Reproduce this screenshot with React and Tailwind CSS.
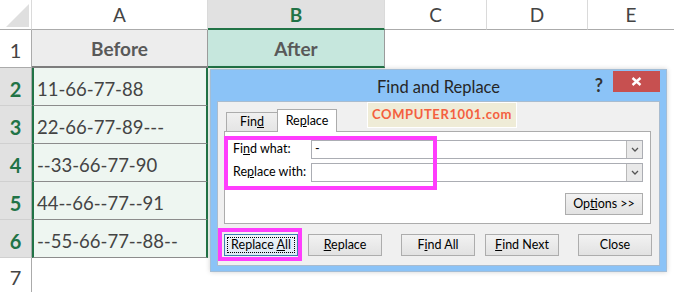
import React from "react";

const data = [
  { n: 2, v: "11-66-77-88" },
  { n: 3, v: "22-66-77-89---" },
  { n: 4, v: "--33-66-77-90" },
  { n: 5, v: "44--66--77--91" },
  { n: 6, v: "--55-66-77--88--" },
];

function Btn({ children, className = "" }) {
  return (
    <div
      className={
        "w-[74px] h-[22px] flex items-center justify-center border border-[#adadad] bg-gradient-to-b from-[#f2f2f2] to-[#e2e2e2] " +
        className
      }
    >
      {children}
    </div>
  );
}

function Chevron() {
  return (
    <div className="w-[16px] h-full flex items-center justify-center bg-[#e9e9e9] border-l border-[#b9b9b9]">
      <svg width="8" height="5" viewBox="0 0 8 5">
        <path d="M1 1 L4 4 L7 1" fill="none" stroke="#555" strokeWidth="1.3" />
      </svg>
    </div>
  );
}

function FindReplace() {
  return (
    <div className="absolute left-[210px] top-[69px] w-[457px] h-[203px] flex flex-col bg-[#8bc3f7] border border-[#a3bdd6] shadow-[0_0_5px_rgba(0,0,0,0.18)] text-black">
      {/* title bar */}
      <div className="relative h-[31px] flex items-center justify-center pt-[3px] text-[16.5px] text-[#262626]">
        Find and Replace
        <span className="absolute right-[63px] top-[2px] text-[18px] font-bold text-[#333]">?</span>
        <div className="absolute right-[6px] top-[1px] w-[47px] h-[21px] bg-[#c75050] flex items-center justify-center">
          <svg width="11" height="9" viewBox="0 0 11 9">
            <path d="M1.5 1 L9.5 8 M9.5 1 L1.5 8" stroke="#fff" strokeWidth="2.4" />
          </svg>
        </div>
      </div>

      {/* body */}
      <div className="mx-[6px] mb-[5px] flex-1 flex flex-col bg-[#f0f0f0] border border-[#a9bccf] text-[12.5px]">
        {/* tabs */}
        <div className="h-[29px] flex items-end pl-[8px]">
          <div className="w-[51px] h-[19px] flex items-center justify-center border border-r-0 border-b-0 border-[#acacac] bg-gradient-to-b from-[#f0f0f0] to-[#e5e5e5]">
            <span>
              Fin<span className="underline">d</span>
            </span>
          </div>
          <div className="relative z-10 -mb-px w-[60px] h-[23px] flex items-center justify-center border border-b-0 border-[#acacac] bg-white">
            <span>
              Re<span className="underline">p</span>lace
            </span>
          </div>
          <div className="self-start ml-[30px] w-[150px] h-[26px] flex items-center justify-center bg-[#efecd7] border border-white text-[13px] font-bold tracking-[0.6px] text-[#f4603f]">
            COMPUTER1001.com
          </div>
        </div>

        {/* tab panel */}
        <div className="relative ml-[6px] w-[427px] h-[93px] flex flex-col bg-white border border-[#acacac] pt-[8px]">
          <div className="flex items-center h-[19px]">
            <span className="w-[86px] pl-[8px]">
              Fi<span className="underline">n</span>d what:
            </span>
            <div className="w-[332px] h-[19px] flex items-center border border-[#abadb3]">
              <span className="flex-1 pl-[3px] leading-none">-</span>
              <Chevron />
            </div>
          </div>
          <div className="flex items-center h-[19px] mt-[4px]">
            <span className="w-[86px] pl-[8px]">
              Re<span className="underline">p</span>lace with:
            </span>
            <div className="w-[332px] h-[19px] flex items-center border border-[#abadb3]">
              <span className="flex-1" />
              <Chevron />
            </div>
          </div>
          <div className="self-end mr-[7px] mt-[11px]">
            <Btn className="w-[78px] h-[21px]">
              <span>
                Op<span className="underline">t</span>ions &gt;&gt;
              </span>
            </Btn>
          </div>
          <div className="absolute left-[-1px] top-[4px] w-[213px] h-[54px] border-4 border-[#ff3dfd]" />
        </div>

        {/* buttons */}
        <div className="flex items-center mt-[10px] pl-[6px]">
          <div className="relative">
            <div className="w-[74px] h-[22px] p-[2px] border border-[#3c7fb1] bg-gradient-to-b from-[#edf3f9] to-[#dde8f3]">
              <div className="w-full h-full flex items-center justify-center border border-dotted border-black">
                <span>
                  Replace <span className="underline">A</span>ll
                </span>
              </div>
            </div>
            <div className="absolute left-[-6px] top-[-6px] w-[84px] h-[33px] border-4 border-[#ff3dfd]" />
          </div>
          <Btn className="ml-[10px]">
            <span>
              <span className="underline">R</span>eplace
            </span>
          </Btn>
          <Btn className="ml-[19px]">
            <span>
              F<span className="underline">i</span>nd All
            </span>
          </Btn>
          <Btn className="ml-[10px]">
            <span>
              <span className="underline">F</span>ind Next
            </span>
          </Btn>
          <Btn className="ml-[19px]">Close</Btn>
        </div>
      </div>
    </div>
  );
}

export default function App() {
  return (
    <div className="relative w-[674px] h-[292px] overflow-hidden bg-white font-['Lato',sans-serif]">
      <div className="grid grid-cols-[32px_176px_177px_102px_101px_86px] grid-rows-[30px_38px_38px_38px_38px_38px_38px_34px]">
        {/* column headers */}
        <div className="flex items-end justify-end pr-[2px] pb-[2px] border-r border-b border-r-[#dadada] border-b-[#ababab]">
          <svg width="23" height="23" viewBox="0 0 23 23">
            <polygon points="23,0 23,23 0,23" fill="#dfdfdf" />
          </svg>
        </div>
        <div className="flex items-center justify-center pt-[2px] text-[19px] text-[#444] border-r border-b border-r-[#dadada] border-b-[#ababab]">
          A
        </div>
        <div className="flex items-center justify-center pt-[2px] text-[19px] font-bold text-[#217346] bg-[#e1e1e1] border-r border-r-[#dadada] border-b-2 border-b-[#217346]">
          B
        </div>
        <div className="flex items-center justify-center pt-[2px] text-[19px] text-[#444] border-r border-b border-r-[#dadada] border-b-[#ababab]">
          C
        </div>
        <div className="flex items-center justify-center pt-[2px] text-[19px] text-[#444] border-r border-b border-r-[#dadada] border-b-[#ababab]">
          D
        </div>
        <div className="flex items-center justify-center pt-[2px] text-[19px] text-[#444] border-b border-b-[#ababab]">
          E
        </div>

        {/* row 1 */}
        <div className="flex items-center justify-center pt-[3px] text-[20px] text-[#444] border-r border-b border-r-[#ababab] border-b-[#ababab]">
          1
        </div>
        <div className="flex items-center justify-center pt-[2px] text-[19px] font-bold text-[#595959] bg-[#ededed] border-r border-r-[#9b9b9b] border-b-2 border-b-[#7d7d7d]">
          Before
        </div>
        <div className="flex items-center justify-center pt-[2px] text-[19px] font-bold text-[#595959] bg-[#c6e7dd] border-r border-r-[#9b9b9b] border-b-2 border-b-[#217346]">
          After
        </div>
        <div />
        <div />
        <div />

        {/* rows 2-6 */}
        {data.map((r) => (
          <React.Fragment key={r.n}>
            <div className="flex items-center justify-center pt-[5px] text-[20px] font-bold text-[#217346] bg-[#e1e1e1] border-r border-b border-r-[#ababab] border-b-[#d0d0d0]">
              {r.n}
            </div>
            <div className="flex items-center pl-[3px] pt-[6px] text-[18.5px] text-[#444] bg-[#eef6f1] border-l-2 border-r-2 border-l-[#217346] border-r-[#217346] border-b border-b-[#8c8c8c]">
              {r.v}
            </div>
            <div className="bg-[#eef6f1]" />
            <div />
            <div />
            <div />
          </React.Fragment>
        ))}

        {/* row 7 */}
        <div className="flex items-center justify-center pt-[3px] text-[20px] text-[#444] border-r border-r-[#ababab]">
          7
        </div>
        <div />
        <div />
        <div />
        <div />
        <div />
      </div>

      <FindReplace />
    </div>
  );
}
